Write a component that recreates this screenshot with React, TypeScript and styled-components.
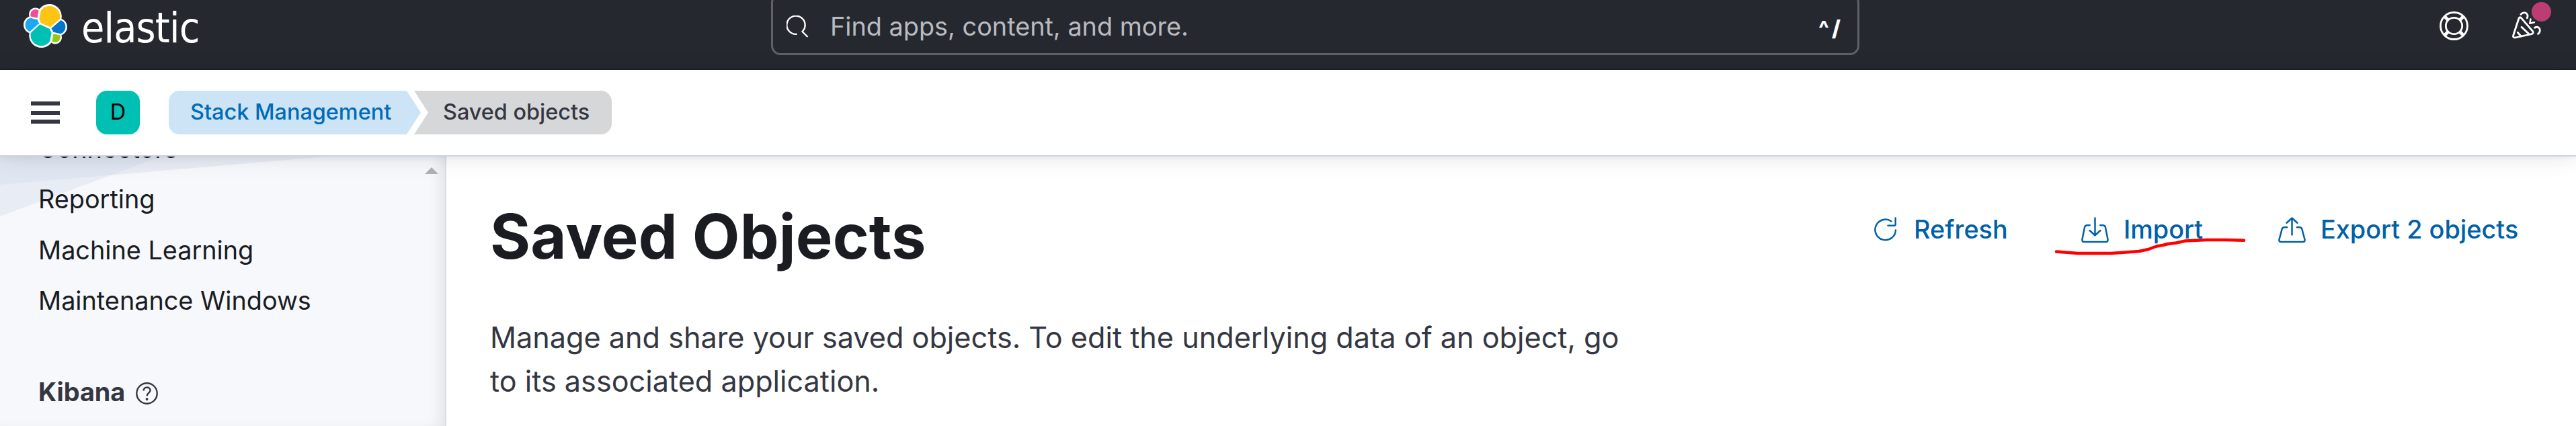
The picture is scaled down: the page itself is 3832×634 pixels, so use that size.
import React from 'react';
import styled, { createGlobalStyle } from 'styled-components';

const Global = createGlobalStyle`
  * { box-sizing: border-box; }
  body { margin: 0; background: #fff; overflow: hidden; font-family: Inter, sans-serif; }
  h1, p { margin: 0; }
`;

const Page = styled.div`
  width: 3832px;
  height: 634px;
  overflow: hidden;
  display: flex;
  flex-direction: column;
`;

const TopBar = styled.header`
  height: 104px;
  flex: none;
  background: #25282f;
  border-bottom: 1px solid #1d1e24;
  display: flex;
  align-items: flex-start;
`;

const Brand = styled.div`
  display: flex;
  width: 1147px;
  padding: 6px 0 0 35px;
  svg { flex: none; }
`;

const Wordmark = styled.span`
  margin-left: 21px;
  font-family: 'DejaVu Sans Condensed', 'DejaVu Sans', sans-serif;
  font-stretch: condensed;
  font-size: 62px;
  line-height: 72px;
  letter-spacing: -0.8px;
  color: #fff;
`;

const Search = styled.div`
  width: 1619px;
  height: 92px;
  margin-top: -10px;
  border: 3px solid #5f6166;
  border-radius: 14px;
  display: flex;
  align-items: flex-start;
  padding: 30px 25px 0 20px;
  color: #fff;
`;

const SearchText = styled.span`
  margin: -7px 0 0 32px;
  flex: 1;
  font-size: 37.8px;
  line-height: 46px;
  color: #b9bbc0;
`;

const Shortcut = styled.span`
  font-size: 32.4px;
  line-height: 40px;
  font-weight: 800;
  word-spacing: -3px;
`;

const TopActions = styled.div`
  margin-left: auto;
  padding: 17px 52px 0 0;
  display: flex;
  gap: 65px;
`;

const Notify = styled.div`
  position: relative;
  height: 43px;
`;

const Dot = styled.i`
  position: absolute;
  left: 29px;
  top: -14px;
  width: 29px;
  height: 29px;
  border-radius: 50%;
  background: #bc3d74;
`;

const NavBar = styled.div`
  height: 129px;
  flex: none;
  position: relative;
  z-index: 2;
  background: #fff;
  border-bottom: 2px solid #cdd3e2;
  box-shadow: 0 2px 32px rgba(0, 0, 0, 0.1), 0 2px 8px rgba(0, 0, 0, 0.04);
  display: flex;
  align-items: center;
  padding-left: 46px;
`;

const Burger = styled.div`
  width: 43px;
  height: 33px;
  display: flex;
  flex-direction: column;
  justify-content: space-between;
  i { height: 6px; background: #343741; }
`;

const Space = styled.div`
  width: 65px;
  height: 65px;
  margin: 0 43px 0 54px;
  border-radius: 16px;
  background: #00bfb3;
  color: #000;
  font-size: 32.4px;
  font-weight: 400;
  line-height: 63px;
  text-align: center;
`;

const Crumb = styled.div<{ $last?: boolean }>`
  height: 65px;
  width: ${(p) => (p.$last ? 294 : 375)}px;
  margin-left: ${(p) => (p.$last ? -10 : 0)}px;
  padding-left: ${(p) => (p.$last ? 43 : 32)}px;
  border-radius: ${(p) => (p.$last ? '0 16px 16px 0' : '16px 0 0 16px')};
  clip-path: ${(p) =>
    p.$last
      ? 'polygon(0 0, 100% 0, 100% 100%, 0 100%, 21px 50%)'
      : 'polygon(0 0, 354px 0, 100% 50%, 354px 100%, 0 100%)'};
  background: ${(p) => (p.$last ? '#d6d7d9' : '#cce4f5')};
  color: ${(p) => (p.$last ? '#343741' : '#006bb8')};
  font-size: 32.4px;
  font-weight: 500;
  line-height: 64px;
  white-space: nowrap;
`;

const Body = styled.div`
  flex: 1;
  min-height: 0;
  display: flex;
`;

const Sidebar = styled.aside`
  position: relative;
  width: 664px;
  flex: none;
  border-right: 2px solid #d9dde8;
  background: #f7f8fc;
  box-shadow: inset -14px 0 22px -8px rgba(0, 0, 0, 0.09);
  display: flex;
  justify-content: space-between;
`;

const Facets = styled.svg`
  position: absolute;
  left: 0;
  top: 0;
`;

const Menu = styled.nav`
  position: relative;
  margin: -49px 0 0 57px;
  display: flex;
  flex-direction: column;
`;

const MenuItem = styled.span`
  height: 75.4px;
  font-size: 37.8px;
  line-height: 75.4px;
  color: #1a1c21;
  white-space: nowrap;
`;

const MenuGroup = styled.div`
  height: 76px;
  margin-top: 59.4px;
  display: flex;
  align-items: center;
  gap: 16px;
  font-size: 37.8px;
  font-weight: 700;
  line-height: 76px;
  color: #343741;
  svg { margin-top: 6px; }
`;

const ScrollUp = styled.i`
  width: 20px;
  height: 10px;
  margin: 16px 10px 0 0;
  background: #adb0b8;
  clip-path: polygon(50% 0, 100% 100%, 0 100%);
`;

const Main = styled.main`
  flex: 1;
  display: flex;
  justify-content: space-between;
  padding: 63px 84px 0 65px;
`;

const Title = styled.h1`
  font-size: 91.8px;
  line-height: 111px;
  font-weight: 700;
  letter-spacing: 0.2px;
  color: #1a1c21;
  white-space: nowrap;
`;

const Lead = styled.p`
  margin-top: 63px;
  font-size: 43.2px;
  line-height: 65px;
  color: #343741;
  white-space: nowrap;
`;

const Actions = styled.div`
  position: relative;
  display: flex;
  align-items: flex-start;
  height: 90px;
  margin-top: 22px;
`;

const Action = styled.div<{ $width: number }>`
  display: flex;
  align-items: center;
  width: ${(p) => p.$width}px;
  height: 48px;
  gap: 21px;
  font-size: 37.8px;
  font-weight: 500;
  line-height: 46px;
  color: #0061a6;
  white-space: nowrap;
`;

const IconBox = styled.span`
  display: flex;
  flex: none;
  width: 43px;
  justify-content: center;
`;

const Label = styled.span`
  padding-bottom: 2px;
`;

const Marker = styled.svg`
  position: absolute;
  left: 271px;
  top: 27px;
`;

const ElasticLogo = () => (
  <svg width="65" height="65" viewBox="0 0 32 32">
    <path fill="#fff" d="M32 16.77c0-2.7-1.68-5.07-4.21-5.98.11-.58.17-1.16.17-1.77C27.96 4.04 23.93 0 18.95 0c-2.91 0-5.6 1.39-7.3 3.74-.83-.65-1.85-1-2.92-1-2.63 0-4.76 2.14-4.76 4.76 0 .58.1 1.13.29 1.64C1.69 10.07 0 12.51 0 15.22c0 2.72 1.69 5.1 4.23 6.01-.11.57-.17 1.16-.17 1.77C4.06 27.97 8.09 32 13.05 32c2.92 0 5.61-1.4 7.3-3.75.84.66 1.87 1.02 2.93 1.02 2.63 0 4.76-2.14 4.76-4.76 0-.58-.1-1.13-.29-1.64C30.3 21.93 32 19.48 32 16.77" />
    <path fill="#fec514" d="M12.58 13.787l7.002 3.211 7.066-6.213a7.85 7.85 0 0 0 .152-1.557c0-4.287-3.464-7.775-7.722-7.775a7.7 7.7 0 0 0-6.38 3.39l-1.176 6.124 1.058 2.82z" />
    <path fill="#00bfb3" d="M5.333 21.228a7.96 7.96 0 0 0-.154 1.576c0 4.3 3.474 7.798 7.744 7.798a7.73 7.73 0 0 0 6.42-3.41l1.166-6.1-1.557-2.99-7.025-3.214-6.594 6.34z" />
    <path fill="#f04e98" d="M5.288 9.067l4.8 1.137L11.14 4.72a3.8 3.8 0 0 0-2.299-.775 3.82 3.82 0 0 0-3.552 5.12z" />
    <path fill="#1ba9f5" d="M4.872 10.214c-2.145.714-3.6 2.766-3.6 5.036 0 2.21 1.36 4.183 3.402 4.965l6.735-6.115-1.236-2.655-5.301-1.231z" />
    <path fill="#93c90e" d="M20.874 27.191a3.8 3.8 0 0 0 2.285.778 3.82 3.82 0 0 0 3.55-5.117l-4.796-1.127-1.04 5.466z" />
    <path fill="#07c" d="M21.848 20.563l5.28 1.24c2.146-.714 3.6-2.766 3.6-5.037a5.325 5.325 0 0 0-3.41-4.958l-6.905 6.079 1.435 2.676z" />
  </svg>
);

const SearchIcon = () => (
  <svg width="33" height="33" viewBox="0 0 33 33" fill="none" stroke="#fff" strokeWidth="2.4">
    <path d="M15.5 27.8A13.6 13.6 0 1 1 23.5 24L31.5 32" />
  </svg>
);

const HelpRing = () => (
  <svg width="43" height="43" viewBox="0 0 43 43" fill="none" stroke="#fff">
    <circle cx="21.5" cy="21.5" r="20" strokeWidth="2.8" />
    <circle cx="21.5" cy="21.5" r="12.2" strokeWidth="2.8" />
    <path strokeWidth="5" d="M7.8 7.8l5.2 5.2M35.2 7.8l-5.2 5.2M7.8 35.2l5.2-5.2M35.2 35.2l-5.2-5.2" />
  </svg>
);

const Cheer = () => (
  <svg width="43" height="43" viewBox="0 0 43 43" fill="none" stroke="#fff" strokeWidth="2.8" strokeLinecap="round" strokeLinejoin="round">
    <path d="M10 10.2Q11.5 7.5 13.6 9.8L30.5 29.3Q32.5 32.6 29 33.6L4.5 39Q1 39.2 1.6 36Z" />
    <path d="M14 23.3L25.5 34M8.3 31.3l5 5.7" />
    <path d="M13 4.3C16 .5 22 1 23 6q.2 2-.8 3.8" />
    <path d="M33.6 24.3C38 21.5 42.5 25 41 30q-.6 2-2.5 3.5" />
    <path strokeWidth="2.5" d="M27.5 11.5l-1.2 6.3 6.5-1.6" />
  </svg>
);

const Question = () => (
  <svg width="33" height="33" viewBox="0 0 33 33" fill="none" stroke="#343741" strokeWidth="2.4">
    <circle cx="16.5" cy="16.5" r="15.2" />
    <path d="M11.6 12.5c0-6.8 10-6.4 10-.5 0 3.8-5 3.8-5 8.2" />
    <circle cx="16.5" cy="25" r="1.9" fill="#343741" stroke="none" />
  </svg>
);

const Refresh = () => (
  <svg width="34" height="38" viewBox="0 0 34 38" fill="none" stroke="#0061a6" strokeWidth="2.5" strokeLinecap="round" strokeLinejoin="round">
    <path d="M25.3 6.3A15.3 15.3 0 1 0 32 19.5" />
    <path d="M31.7 1.5V11Q31.7 12.8 29.9 12.8H20.500" />
  </svg>
);

const Tray = ({ up }: { up?: boolean }) => (
  <svg width="41" height="39" viewBox="0 0 41 39" fill="none" stroke="#0061a6" strokeWidth="2.5" strokeLinecap="round" strokeLinejoin="round">
    {up ? (
      <>
        <path d="M13.2 15.3H9.5Q6.3 15.3 5.6 18L1.5 33.5Q1 37 4.2 37H36.8Q40 37 39.5 33.5L35.4 18Q34.7 15.3 31.5 15.3H27.8" />
        <path d="M20.5 26.5V1.5M12.5 8.7l8-7.2 8 7.2" />
      </>
    ) : (
      <>
        <path d="M12.7 12.3H9Q5.8 12.3 5.1 15L1.5 33Q1 37 4.2 37H36.8Q40 37 39.5 33L35.9 15Q35.2 12.3 32 12.3H28.3" />
        <path d="M20.5 1.5V27M12.5 20l8 7.2 8-7.2" />
      </>
    )}
  </svg>
);

const menu = ['Connectors', 'Reporting', 'Machine Learning', 'Maintenance Windows'];

export default function App() {
  return (
    <Page>
      <Global />
      <TopBar>
        <Brand>
          <ElasticLogo />
          <Wordmark>elastic</Wordmark>
        </Brand>
        <Search>
          <SearchIcon />
          <SearchText>Find apps, content, and more.</SearchText>
          <Shortcut>^ /</Shortcut>
        </Search>
        <TopActions>
          <HelpRing />
          <Notify>
            <Cheer />
            <Dot />
          </Notify>
        </TopActions>
      </TopBar>
      <NavBar>
        <Burger><i /><i /><i /></Burger>
        <Space>D</Space>
        <Crumb>Stack Management</Crumb>
        <Crumb $last>Saved objects</Crumb>
      </NavBar>
      <Body>
        <Sidebar>
          <Facets width="500" height="100" viewBox="0 0 500 100">
            <path fill="#d3dbea" fillOpacity="0.4" d="M0 0H484L0 42Z" />
            <path fill="#d3dbea" fillOpacity="0.4" d="M0 0H240L0 89Z" />
          </Facets>
          <Menu>
            {menu.map((label) => (
              <MenuItem key={label}>{label}</MenuItem>
            ))}
            <MenuGroup>Kibana <Question /></MenuGroup>
          </Menu>
          <ScrollUp />
        </Sidebar>
        <Main>
          <div>
            <Title>Saved Objects</Title>
            <Lead>
              Manage and share your saved objects. To edit the underlying data of an object, go
              <br />
              to its associated application.
            </Lead>
          </div>
          <Actions>
            <Action $width={312}>
              <IconBox><Refresh /></IconBox>
              <Label>Refresh</Label>
            </Action>
            <Action $width={293}>
              <IconBox><Tray /></IconBox>
              <Label>Import</Label>
            </Action>
            <Action $width={360}>
              <IconBox><Tray up /></IconBox>
              <Label>Export 2 objects</Label>
            </Action>
            <Marker width="290" height="40" viewBox="3054 345 290 40" fill="none" stroke="#f00" strokeWidth="4.5" strokeLinecap="round" strokeLinejoin="round">
              <path d="M3059 374.5L3091 377H3140L3162 375.5 3182 374 3196 371 3208 366.5 3217 365 3225 363 3237 361.5 3251 358.5 3283 357H3310L3338 357.7" />
            </Marker>
          </Actions>
        </Main>
      </Body>
    </Page>
  );
}
